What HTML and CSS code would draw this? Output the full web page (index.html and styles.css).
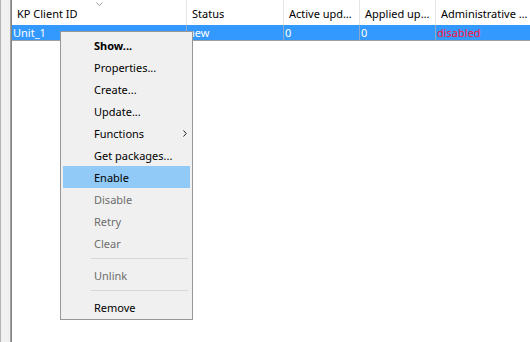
FILE: index.html
```html
<!DOCTYPE html>
<html>
<head>
<meta charset="utf-8">
<link rel="stylesheet" href="styles.css">
</head>
<body>
<div class="app">
  <div class="strip"></div>
  <div class="list">
    <div class="header">
      <div class="hcell first">KP Client ID
        <svg class="sort" width="7" height="4" viewBox="0 0 7 4"><polyline points="0.5,0.5 3.5,3.5 6.5,0.5" fill="none" stroke="#9a9a9a" stroke-width="1"/></svg>
      </div>
      <div class="hcell">Status</div>
      <div class="hcell">Active upd…</div>
      <div class="hcell">Applied up…</div>
      <div class="hcell">Administrative …</div>
    </div>
    <div class="row selected">
      <div class="cell first">Unit_1</div>
      <div class="cell">new</div>
      <div class="cell">0</div>
      <div class="cell">0</div>
      <div class="cell state-off">disabled</div>
    </div>
  </div>
  <div class="menu">
    <div class="item bold">Show...</div>
    <div class="item">Properties...</div>
    <div class="item">Create...</div>
    <div class="item">Update...</div>
    <div class="item sub"><span>Functions</span><svg class="arrow" width="4" height="7" viewBox="0 0 4 7"><polyline points="0.5,0.5 3.2,3.5 0.5,6.5" fill="none" stroke="#222" stroke-width="1"/></svg></div>
    <div class="item">Get packages...</div>
    <div class="item hot">Enable</div>
    <div class="item off">Disable</div>
    <div class="item off">Retry</div>
    <div class="item off">Clear</div>
    <div class="sep"></div>
    <div class="item off">Unlink</div>
    <div class="sep"></div>
    <div class="item">Remove</div>
  </div>
</div>
</body>
</html>
```

FILE: styles.css
```css
html, body {
  margin: 0;
  padding: 0;
  background: #ffffff;
}
body {
  font-family: "Noto Sans", "DejaVu Sans", sans-serif;
  font-size: 11px;
  color: #000;
}
.app {
  position: relative;
  display: flex;
  width: 530px;
  height: 342px;
  overflow: hidden;
}
.strip {
  width: 12px;
  flex: none;
  box-sizing: border-box;
  background: #f0f0f0;
  border-left: 1px solid #b4b4b4;
  border-right: 1px solid #828282;
  box-shadow: inset -1px 0 0 #a0a0a0;
}
.list {
  flex: 1;
  background: #fff;
}
.header, .row {
  display: grid;
  grid-template-columns: 174px 97px 76px 76px 95px;
}
.header {
  height: 25px;
}
.hcell {
  position: relative;
  display: flex;
  align-items: center;
  padding: 1px 0 0 5px;
  border-left: 1px solid #e5e5e5;
  white-space: nowrap;
  overflow: hidden;
}
.hcell.first {
  border-left: none;
  padding-left: 5px;
}
.sort {
  position: absolute;
  left: 84px;
  top: 2px;
}
.row {
  height: 15px;
  border-bottom: 1px solid #a0a0a0;
}
.row.selected {
  background: #3399ff;
  color: #fff;
}
.cell {
  display: flex;
  align-items: center;
  padding-left: 1px;
  border-left: 1px solid #8fa8c8;
  white-space: nowrap;
  overflow: hidden;
}
.cell.first {
  border-left: none;
  padding-left: 1px;
}
.state-off {
  color: #ff1438;
}
.menu {
  position: absolute;
  left: 60px;
  top: 31px;
  width: 133px;
  box-sizing: border-box;
  background: #f0f0f0;
  border: 1px solid #979797;
  padding: 2px 2px 1px 2px;
}
.item {
  height: 22px;
  display: flex;
  align-items: center;
  justify-content: space-between;
  padding: 0 3px 0 31px;
  white-space: nowrap;
}
.item.bold {
  font-weight: 700;
}
.item.hot {
  background: #91c9f7;
}
.item.off {
  color: #6d6d6d;
}
.sep {
  height: 10px;
  box-sizing: border-box;
  padding-top: 4px;
  margin: 0 2px 0 28px;
}
.sep::before {
  content: "";
  display: block;
  height: 1px;
  background: #d7d7d7;
}
```
